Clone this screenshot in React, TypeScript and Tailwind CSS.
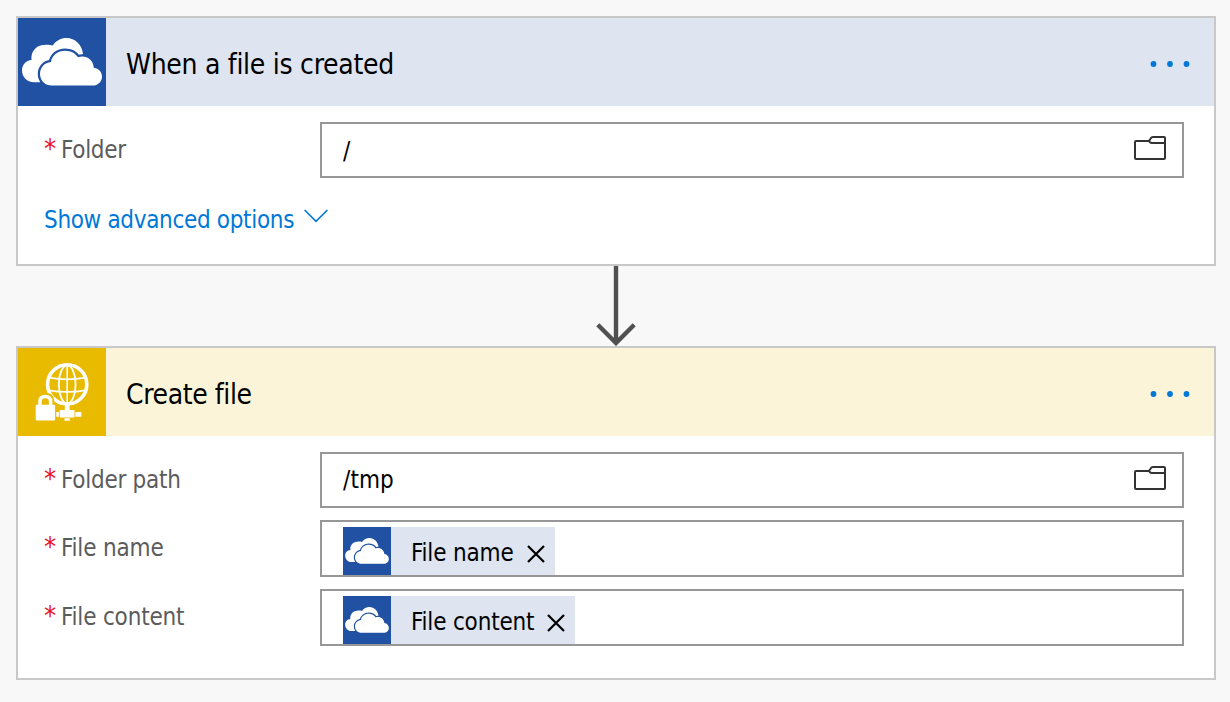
import React from "react";

function CloudIcon({ className }: { className: string }) {
  return (
    <svg viewBox="0 0 88 88" className={className}>
      <rect width="88" height="88" fill="#2151a3" />
      <path
        d="M22 64.3H16C9 64.3 4 59 4 52.5C4 46.5 8 42.5 13.5 42C12.5 33 19 27 26 27C29 26.5 32.5 27 34.7 27.5C38 22.5 43 20 48.5 20C57 20 64 26.5 65 36L50 50Z"
        fill="#fff"
      />
      <path
        d="M34 67.6C27 67.6 22 62.5 22 56C22 49.5 26.5 44.5 33 44C34 37 40 32.7 47 32.7C53 32.7 57.5 35.5 60 39.2C68 36.5 75.5 42 75.8 49.7C81 50.5 84 54 84 58.7C84 63.6 80 67.6 74.5 67.6Z"
        fill="#fff"
        stroke="#2151a3"
        strokeWidth="4.5"
        paintOrder="stroke"
      />
    </svg>
  );
}

function GlobeLockIcon() {
  return (
    <svg viewBox="0 0 88 88" className="size-[88px] shrink-0" fill="none">
      <rect width="88" height="88" fill="#e8ba00" />
      <g stroke="#fff">
        <circle cx="49.2" cy="36.4" r="19.6" strokeWidth="3.6" />
        <ellipse cx="49.2" cy="36.4" rx="8.4" ry="19" strokeWidth="1.8" />
        <path d="M49.2 17V57" strokeWidth="1.6" />
        <path d="M31 29.6Q49.2 33 67.4 29.6M31 42.3Q49.2 45.5 67.4 42.3" strokeWidth="1.7" />
      </g>
      <path d="M16.2 74V56H18.5V53Q18.5 44.8 27.3 44.8T36.2 53V56H38.5V74Z" fill="#e8ba00" />
      <path d="M22 58V53.5Q22 48.4 27.3 48.4T32.6 53.5V58" stroke="#fff" strokeWidth="3.5" />
      <rect x="17.7" y="56.8" width="19.4" height="15.6" rx="1.2" fill="#fff" />
      <path d="M46.8 57H51.6V62H46.8ZM41.7 62H56.5V69.4H41.7ZM38.3 64H40.9V68.8H38.3ZM57.3 64H63.4V68.8H57.3ZM46.5 70.2H51.8V72.7H46.5Z" fill="#fff" />
    </svg>
  );
}

function FolderIcon() {
  return (
    <svg viewBox="0 0 32 24" className="-mt-1 block h-6 w-8" fill="none" stroke="#333" strokeWidth="2">
      <path d="M15 5H2Q1 5 1 6V22Q1 23 2 23H30Q31 23 31 22V2Q31 1 30 1H19Q17.5 1 16.5 2.8L15 5L16 6.3Q16.7 7 18 7H31" />
    </svg>
  );
}

function Dots() {
  return (
    <svg viewBox="0 0 40 6" className="ml-auto mr-[24px] mt-1 h-[6px] w-10" fill="#0078d7">
      <circle cx="3.5" cy="3" r="2.9" />
      <circle cx="20" cy="3" r="2.9" />
      <circle cx="36.5" cy="3" r="2.9" />
    </svg>
  );
}

function Row({ label, tracking, className, children }: { label: string; tracking: string; className: string; children: React.ReactNode }) {
  return (
    <div className={`flex ${className}`}>
      <div className="flex w-[302px] shrink-0 pl-[26px] pt-3 text-2xl leading-8 text-[#5c5c5c]">
        <span className="-mt-px w-[17px] shrink-0 text-[27px] text-[#e81123]">*</span>
        <span className={`whitespace-nowrap ${tracking}`}>{label}</span>
      </div>
      <div className="flex w-[864px] items-center border-2 border-[#979797] bg-white pl-[21px] pr-4 text-2xl text-black">
        {children}
      </div>
    </div>
  );
}

function Token({ label, tracking, width }: { label: string; tracking: string; width: string }) {
  return (
    <div className={`mt-[5px] flex h-12 items-center bg-[#dee4f0] ${width}`}>
      <CloudIcon className="size-12 shrink-0" />
      <span className={`ml-5 mt-1 whitespace-nowrap leading-8 ${tracking}`}>{label}</span>
      <svg viewBox="0 0 18 18" className="ml-auto mr-[10.5px] mt-[6px] size-[18px]" stroke="#000" strokeWidth="2.2">
        <path d="M1 1L17 17M17 1L1 17" />
      </svg>
    </div>
  );
}

export default function App() {
  return (
    <div className="h-[702px] w-[1230px] overflow-hidden bg-[#f8f8f8] p-4 font-['DejaVu_Sans_Condensed','DejaVu_Sans',sans-serif] [font-stretch:condensed]">
      <section className="h-[250px] w-[1200px] border-2 border-[#c8c8c8] bg-white">
        <header className="flex h-[88px] items-center bg-[#dee4f0]">
          <CloudIcon className="size-[88px] shrink-0" />
          <h2 className="ml-5 mt-1.5 whitespace-nowrap text-[28px] leading-9 tracking-[-0.28px] text-black">When a file is created</h2>
          <Dots />
        </header>
        <Row label="Folder" tracking="tracking-[-0.3px]" className="mt-4 h-14">
          <span className="mt-0.5 leading-8">/</span>
          <span className="mb-px ml-auto"><FolderIcon /></span>
        </Row>
        <button className="ml-[26px] mt-[26px] flex items-center text-2xl leading-8 text-[#0078d7]">
          <span className="whitespace-nowrap tracking-[-0.33px]">Show advanced options</span>
          <svg viewBox="0 0 24 14" className="-mt-2 ml-[10px] h-[14px] w-6" fill="none" stroke="currentColor" strokeWidth="1.6">
            <path d="M0.6 1L12 12.4L23.4 1" />
          </svg>
        </button>
      </section>
      <div className="flex h-20 pl-[580px]">
        <svg viewBox="0 0 40 80" className="h-20 w-10" fill="none" stroke="#505050" strokeWidth="4.4">
          <path d="M20 0V77M1.8 58.8L20 77L38.2 58.8" />
        </svg>
      </div>
      <section className="h-[334px] w-[1200px] border-2 border-[#c8c8c8] bg-white">
        <header className="flex h-[88px] items-center bg-[#fcf4d9]">
          <GlobeLockIcon />
          <h2 className="ml-5 mt-1.5 whitespace-nowrap text-[28px] leading-9 tracking-[-0.4px] text-black">Create file</h2>
          <Dots />
        </header>
        <Row label="Folder path" tracking="tracking-[-0.27px]" className="mt-4 h-14">
          <span className="leading-8 tracking-[0.1px]">/tmp</span>
          <span className="mb-px ml-auto"><FolderIcon /></span>
        </Row>
        <Row label="File name" tracking="tracking-[-0.17px]" className="mt-3 h-[57px]">
          <Token label="File name" tracking="tracking-[-0.17px]" width="w-[212px]" />
        </Row>
        <Row label="File content" tracking="tracking-[-0.18px]" className="mt-3 h-[57px]">
          <Token label="File content" tracking="tracking-[-0.18px]" width="w-[232px]" />
        </Row>
      </section>
    </div>
  );
}
